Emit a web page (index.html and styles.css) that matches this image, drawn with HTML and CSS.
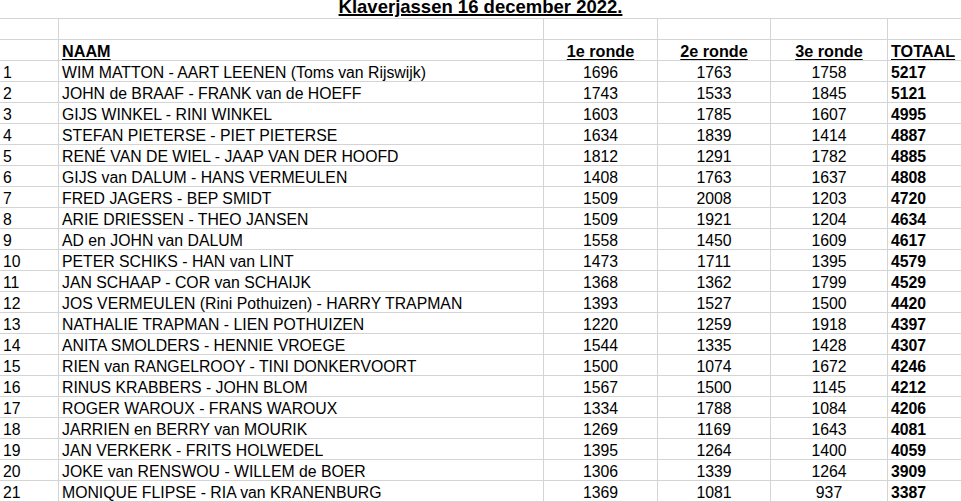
FILE: index.html
```html
<!DOCTYPE html>
<html lang="nl">
<head>
<meta charset="utf-8">
<title>Klaverjassen 16 december 2022.</title>
<link rel="stylesheet" href="styles.css">
</head>
<body>
<div class="sheet">
  <div class="row title-row"><div class="title"><u>Klaverjassen 16 december 2022.</u></div></div>
  <div class="row"><div class="c"></div><div class="c"></div><div class="c"></div><div class="c"></div><div class="c"></div><div class="c last"></div></div>
  <div class="row head"><div class="c"></div><div class="c"><u>NAAM</u></div><div class="c ctr"><u>1e ronde</u></div><div class="c ctr"><u>2e ronde</u></div><div class="c ctr"><u>3e ronde</u></div><div class="c last"><u>TOTAAL</u></div></div>
  <div class="row"><div class="c">1</div><div class="c">WIM MATTON - AART LEENEN (Toms van Rijswijk)</div><div class="c ctr">1696</div><div class="c ctr">1763</div><div class="c ctr">1758</div><div class="c last b">5217</div></div>
  <div class="row"><div class="c">2</div><div class="c">JOHN de BRAAF - FRANK van de HOEFF</div><div class="c ctr">1743</div><div class="c ctr">1533</div><div class="c ctr">1845</div><div class="c last b">5121</div></div>
  <div class="row"><div class="c">3</div><div class="c">GIJS WINKEL - RINI WINKEL</div><div class="c ctr">1603</div><div class="c ctr">1785</div><div class="c ctr">1607</div><div class="c last b">4995</div></div>
  <div class="row"><div class="c">4</div><div class="c">STEFAN PIETERSE - PIET PIETERSE</div><div class="c ctr">1634</div><div class="c ctr">1839</div><div class="c ctr">1414</div><div class="c last b">4887</div></div>
  <div class="row"><div class="c">5</div><div class="c">RENÉ VAN DE WIEL - JAAP VAN DER HOOFD</div><div class="c ctr">1812</div><div class="c ctr">1291</div><div class="c ctr">1782</div><div class="c last b">4885</div></div>
  <div class="row"><div class="c">6</div><div class="c">GIJS van DALUM - HANS VERMEULEN</div><div class="c ctr">1408</div><div class="c ctr">1763</div><div class="c ctr">1637</div><div class="c last b">4808</div></div>
  <div class="row"><div class="c">7</div><div class="c">FRED JAGERS - BEP SMIDT</div><div class="c ctr">1509</div><div class="c ctr">2008</div><div class="c ctr">1203</div><div class="c last b">4720</div></div>
  <div class="row"><div class="c">8</div><div class="c">ARIE DRIESSEN - THEO JANSEN</div><div class="c ctr">1509</div><div class="c ctr">1921</div><div class="c ctr">1204</div><div class="c last b">4634</div></div>
  <div class="row"><div class="c">9</div><div class="c">AD en JOHN van DALUM</div><div class="c ctr">1558</div><div class="c ctr">1450</div><div class="c ctr">1609</div><div class="c last b">4617</div></div>
  <div class="row"><div class="c">10</div><div class="c">PETER SCHIKS - HAN van LINT</div><div class="c ctr">1473</div><div class="c ctr">1711</div><div class="c ctr">1395</div><div class="c last b">4579</div></div>
  <div class="row"><div class="c">11</div><div class="c">JAN SCHAAP - COR van SCHAIJK</div><div class="c ctr">1368</div><div class="c ctr">1362</div><div class="c ctr">1799</div><div class="c last b">4529</div></div>
  <div class="row"><div class="c">12</div><div class="c">JOS VERMEULEN (Rini Pothuizen) - HARRY TRAPMAN</div><div class="c ctr">1393</div><div class="c ctr">1527</div><div class="c ctr">1500</div><div class="c last b">4420</div></div>
  <div class="row"><div class="c">13</div><div class="c">NATHALIE TRAPMAN - LIEN POTHUIZEN</div><div class="c ctr">1220</div><div class="c ctr">1259</div><div class="c ctr">1918</div><div class="c last b">4397</div></div>
  <div class="row"><div class="c">14</div><div class="c">ANITA SMOLDERS - HENNIE VROEGE</div><div class="c ctr">1544</div><div class="c ctr">1335</div><div class="c ctr">1428</div><div class="c last b">4307</div></div>
  <div class="row"><div class="c">15</div><div class="c">RIEN van RANGELROOY - TINI DONKERVOORT</div><div class="c ctr">1500</div><div class="c ctr">1074</div><div class="c ctr">1672</div><div class="c last b">4246</div></div>
  <div class="row"><div class="c">16</div><div class="c">RINUS KRABBERS - JOHN BLOM</div><div class="c ctr">1567</div><div class="c ctr">1500</div><div class="c ctr">1145</div><div class="c last b">4212</div></div>
  <div class="row"><div class="c">17</div><div class="c">ROGER WAROUX - FRANS WAROUX</div><div class="c ctr">1334</div><div class="c ctr">1788</div><div class="c ctr">1084</div><div class="c last b">4206</div></div>
  <div class="row"><div class="c">18</div><div class="c">JARRIEN en BERRY van MOURIK</div><div class="c ctr">1269</div><div class="c ctr">1169</div><div class="c ctr">1643</div><div class="c last b">4081</div></div>
  <div class="row"><div class="c">19</div><div class="c">JAN VERKERK - FRITS HOLWEDEL</div><div class="c ctr">1395</div><div class="c ctr">1264</div><div class="c ctr">1400</div><div class="c last b">4059</div></div>
  <div class="row"><div class="c">20</div><div class="c">JOKE van RENSWOU - WILLEM de BOER</div><div class="c ctr">1306</div><div class="c ctr">1339</div><div class="c ctr">1264</div><div class="c last b">3909</div></div>
  <div class="row"><div class="c">21</div><div class="c">MONIQUE FLIPSE - RIA van KRANENBURG</div><div class="c ctr">1369</div><div class="c ctr">1081</div><div class="c ctr">937</div><div class="c last b">3387</div></div>
</div>
</body>
</html>
```
FILE: styles.css
```css
html, body {
  margin: 0;
  padding: 0;
  background: #ffffff;
}
body {
  font-family: "Liberation Sans", Arial, sans-serif;
  font-size: 15.8px;
  color: #000000;
  overflow: hidden;
}
.sheet {
  width: 961px;
}
.row {
  display: grid;
  grid-template-columns: 59px 485px 114px 113px 117px 1fr;
  height: 21px;
}
.c {
  box-sizing: border-box;
  height: 21px;
  border-right: 1px solid #d4d4d4;
  border-bottom: 1px solid #d4d4d4;
  padding: 3px 3px 0 3px;
  line-height: 17px;
  white-space: nowrap;
  overflow: hidden;
}
.c.last {
  border-right: none;
}
.ctr {
  text-align: center;
}
.b {
  font-weight: bold;
}
.head .c {
  font-weight: bold;
  font-size: 16.2px;
}
u {
  text-decoration: underline;
  text-decoration-thickness: 1.5px;
  text-underline-offset: 2px;
}
.title-row {
  display: block;
  height: 19px;
  box-sizing: border-box;
  border-bottom: 1px solid #d4d4d4;
}
.title {
  text-align: center;
  font-weight: bold;
  font-size: 18.5px;
  line-height: 14px;
  white-space: nowrap;
}
.title u {
  text-underline-offset: 1px;
  text-decoration-thickness: 2px;
}
```
